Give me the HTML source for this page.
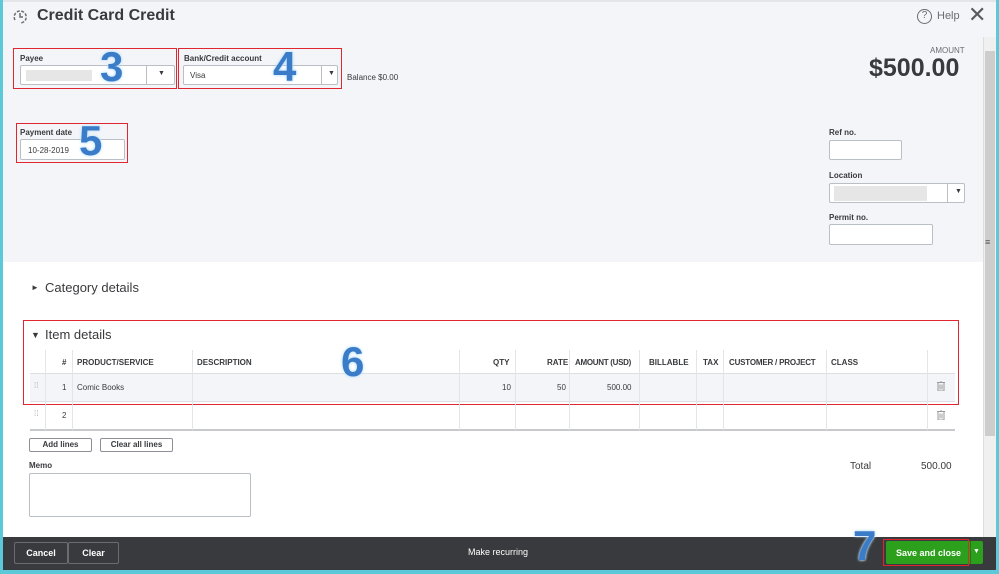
<!DOCTYPE html>
<html><head><style>
*{box-sizing:border-box;margin:0;padding:0}
body{width:999px;height:574px;overflow:hidden;font-family:"Liberation Sans",sans-serif;background:#5bc9d8;position:relative;color:#393a3d}
.main{position:absolute;left:3px;top:0;width:993px;height:570px;background:#fff;overflow:hidden}
.top{position:absolute;left:0;top:0;width:993px;height:262px;background:#f4f5f8}
.abs{position:absolute}
.lbl{font-size:8px;font-weight:bold;color:#393a3d}
.inp{position:absolute;background:#fff;border:1px solid #babec5;border-radius:2px}
.red{position:absolute;border:1px solid #e0262e}
.num{position:absolute;font-size:42px;font-weight:bold;color:#3a7cc8;text-shadow:0 0 3px #9fd3ff,0 0 2px #fff;font-family:"Liberation Sans",sans-serif}
.th{position:absolute;top:358px;font-size:8px;font-weight:bold;color:#393a3d}
.vl{position:absolute;width:1px;background:#e3e5e8}
.btn{position:absolute;border:1px solid #8d9096;border-radius:2px;background:#fff;font-size:8px;font-weight:bold;text-align:center;line-height:12px}
.cell{position:absolute;font-size:8px;color:#393a3d}
</style></head><body>
<div class="main">
<div class="top"></div>
<div class="abs" style="left:0;top:0;width:993px;height:2px;background:#e3e5e8"></div>
<svg class="abs" style="left:9px;top:9px" width="16" height="16" viewBox="0 0 16 16"><path d="M3 11A6 6 0 1 1 8 14" fill="none" stroke="#6b6c72" stroke-width="1.5" stroke-dasharray="3 1.5"/><path d="M8 4V8H11" fill="none" stroke="#6b6c72" stroke-width="1.5"/></svg>
<div class="abs" style="left:34px;top:7px;font-size:16px;font-weight:bold;color:#393a3d">Credit Card Credit</div>
<div class="abs" style="left:914px;top:9px;width:15px;height:15px;border:1.5px solid #6b6c72;border-radius:50%;font-size:10px;text-align:center;line-height:12px;color:#6b6c72">?</div>
<div class="abs" style="left:934px;top:10px;font-size:11px;color:#6b6c72">Help</div>
<div class="abs" style="left:965px;top:2px;font-size:22px;color:#5a5b60">✕</div>

<div class="red" style="left:10px;top:48px;width:164px;height:41px"></div>
<div class="lbl abs" style="left:17px;top:54px">Payee</div>
<div class="inp" style="left:17px;top:65px;width:155px;height:20px"><div class="abs" style="left:5px;top:4px;width:66px;height:11px;background:#e6e6e6"></div><div class="abs" style="left:125px;top:0;width:1px;height:18px;background:#babec5"></div><div class="abs" style="left:137px;top:4px;font-size:7px">▼</div></div>
<div class="num" style="left:97px;top:43px">3</div>
<div class="red" style="left:175px;top:48px;width:164px;height:41px"></div>
<div class="lbl abs" style="left:181px;top:54px">Bank/Credit account</div>
<div class="inp" style="left:180px;top:65px;width:155px;height:20px"><div class="abs" style="left:6px;top:5px;font-size:8px">Visa</div><div class="abs" style="left:137px;top:0;width:1px;height:18px;background:#babec5"></div><div class="abs" style="left:144px;top:4px;font-size:7px">▼</div></div>
<div class="num" style="left:270px;top:43px">4</div>
<div class="abs" style="left:344px;top:73px;font-size:8px">Balance $0.00</div>

<div class="red" style="left:13px;top:123px;width:112px;height:40px"></div>
<div class="lbl abs" style="left:17px;top:128px">Payment date</div>
<div class="inp" style="left:17px;top:139px;width:105px;height:21px"><div class="abs" style="left:7px;top:6px;font-size:8px">10-28-2019</div></div>
<div class="num" style="left:76px;top:117px">5</div>

<div class="abs" style="left:927px;top:46px;font-size:8px;color:#6b6c72">AMOUNT</div>
<div class="abs" style="left:866px;top:54px;font-size:25px;font-weight:bold;color:#393a3d">$500.00</div>
<div class="lbl abs" style="left:826px;top:128px">Ref no.</div>
<div class="inp" style="left:826px;top:140px;width:73px;height:20px"></div>
<div class="lbl abs" style="left:826px;top:171px">Location</div>
<div class="inp" style="left:826px;top:183px;width:136px;height:20px"><div class="abs" style="left:4px;top:2px;width:93px;height:15px;background:#e6e6e6"></div><div class="abs" style="left:117px;top:0;width:1px;height:18px;background:#babec5"></div><div class="abs" style="left:125px;top:4px;font-size:7px">▼</div></div>
<div class="lbl abs" style="left:826px;top:213px">Permit no.</div>
<div class="inp" style="left:826px;top:224px;width:104px;height:21px"></div>

<div class="abs" style="left:980px;top:37px;width:13px;height:500px;background:#f0f0f0;border-left:1px solid #ddd"></div>
<div class="abs" style="left:982px;top:51px;width:10px;height:385px;background:#cdcdcd"></div>
<div class="abs" style="left:982px;top:237px;font-size:9px;color:#555">≡</div>

<div class="abs" style="left:28px;top:283px;font-size:8px">►</div>
<div class="abs" style="left:42px;top:280px;font-size:13px">Category details</div>

<div class="red" style="left:20px;top:320px;width:936px;height:85px"></div>
<div class="abs" style="left:28px;top:330px;font-size:9px">▼</div>
<div class="abs" style="left:42px;top:327px;font-size:13px">Item details</div>

<div class="abs" style="left:27px;top:373px;width:925px;height:28px;background:#f4f5f8"></div>
<div class="abs" style="left:27px;top:373px;width:925px;height:1px;background:#dcdee2"></div>
<div class="abs" style="left:27px;top:401px;width:925px;height:1px;background:#dcdee2"></div>
<div class="abs" style="left:27px;top:429px;width:925px;height:2px;background:#c7c9cd"></div>
<div class="vl" style="left:42px;top:350px;height:80px"></div>
<div class="vl" style="left:69px;top:350px;height:80px"></div>
<div class="vl" style="left:189px;top:350px;height:80px"></div>
<div class="vl" style="left:456px;top:350px;height:80px"></div>
<div class="vl" style="left:512px;top:350px;height:80px"></div>
<div class="vl" style="left:566px;top:350px;height:80px"></div>
<div class="vl" style="left:636px;top:350px;height:80px"></div>
<div class="vl" style="left:693px;top:350px;height:80px"></div>
<div class="vl" style="left:720px;top:350px;height:80px"></div>
<div class="vl" style="left:823px;top:350px;height:80px"></div>
<div class="vl" style="left:924px;top:350px;height:80px"></div>
<div class="th" style="left:59px">#</div>
<div class="th" style="left:74px">PRODUCT/SERVICE</div>
<div class="th" style="left:194px">DESCRIPTION</div>
<div class="th" style="left:490px">QTY</div>
<div class="th" style="left:544px">RATE</div>
<div class="th" style="left:572px;letter-spacing:-0.3px">AMOUNT (USD)</div>
<div class="th" style="left:646px">BILLABLE</div>
<div class="th" style="left:700px">TAX</div>
<div class="th" style="left:726px;letter-spacing:-0.2px">CUSTOMER / PROJECT</div>
<div class="th" style="left:828px">CLASS</div>
<div class="num" style="left:338px;top:338px">6</div>
<div class="cell" style="left:31px;top:381px;color:#aaa">⁞⁞</div>
<div class="cell" style="left:59px;top:383px">1</div>
<div class="cell" style="left:74px;top:383px">Comic Books</div>
<div class="cell" style="left:499px;top:383px">10</div>
<div class="cell" style="left:554px;top:383px">50</div>
<div class="cell" style="left:604px;top:383px">500.00</div>
<svg class="abs" style="left:934px;top:381px" width="8" height="10" viewBox="0 0 8 10"><path d="M0 1.5H8M3 0H5M1 2V10H7V2M3 3.5V8.5M5 3.5V8.5" fill="none" stroke="#999" stroke-width="1"/></svg>
<div class="cell" style="left:31px;top:409px;color:#aaa">⁞⁞</div>
<div class="cell" style="left:59px;top:411px">2</div>
<svg class="abs" style="left:934px;top:410px" width="8" height="10" viewBox="0 0 8 10"><path d="M0 1.5H8M3 0H5M1 2V10H7V2M3 3.5V8.5M5 3.5V8.5" fill="none" stroke="#999" stroke-width="1"/></svg>

<div class="btn" style="left:26px;top:438px;width:63px;height:14px">Add lines</div>
<div class="btn" style="left:97px;top:438px;width:73px;height:14px">Clear all lines</div>
<div class="lbl abs" style="left:26px;top:461px">Memo</div>
<div class="inp" style="left:26px;top:473px;width:222px;height:44px"></div>
<div class="abs" style="left:847px;top:461px;font-size:10px">Total</div>
<div class="abs" style="left:918px;top:461px;font-size:10px">500.00</div>

<div class="abs" style="left:0;top:537px;width:993px;height:33px;background:#393a3d"></div>
<div class="abs" style="left:11px;top:542px;width:54px;height:22px;border:1px solid #6b6c72;border-radius:2px;color:#fff;font-size:9px;font-weight:bold;text-align:center;line-height:20px">Cancel</div>
<div class="abs" style="left:65px;top:542px;width:51px;height:22px;border:1px solid #6b6c72;border-radius:2px;color:#fff;font-size:9px;font-weight:bold;text-align:center;line-height:20px">Clear</div>
<div class="abs" style="left:465px;top:547px;font-size:9px;color:#fff">Make recurring</div>
<div class="abs" style="left:883px;top:541px;width:97px;height:23px;background:#2ca01c;border-radius:2px"></div>
<div class="abs" style="left:967px;top:541px;width:1px;height:23px;background:#1d7a12"></div>
<div class="abs" style="left:893px;top:548px;font-size:9px;font-weight:bold;color:#fff">Save and close</div>
<div class="abs" style="left:970px;top:548px;font-size:7px;color:#fff">▼</div>
<div class="abs" style="left:880px;top:539px;width:86px;height:27px;border:1px solid #e0262e"></div>
<div class="num" style="left:850px;top:522px">7</div>
</div>
</body></html>
